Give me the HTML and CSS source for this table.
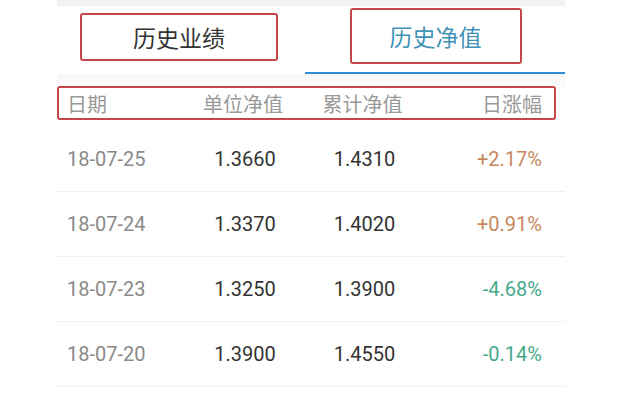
FILE: index.html
```html
<!DOCTYPE html>
<html lang="zh-CN">
<head>
  <meta charset="UTF-8" />
  <meta name="viewport" content="width=device-width, initial-scale=1.0" />
  <title>历史净值</title>
  <link rel="stylesheet" href="styles.css">
</head>
<body>
  <div class="panel">
    <div class="strip"></div>

    <div class="tabs">
      <div class="tab"><span class="mark mark-left">历史业绩</span></div>
      <div class="tab active"><span class="mark mark-right">历史净值</span></div>
    </div>

    <div class="head-wrap">
      <div class="head">
        <span class="c-date">日期</span>
        <span class="c-mid">单位净值</span>
        <span class="c-mid">累计净值</span>
        <span class="c-end">日涨幅</span>
      </div>
    </div>

    <div class="row">
      <span class="c-date date">18-07-25</span>
      <span class="c-mid num">1.3660</span>
      <span class="c-mid num">1.4310</span>
      <span class="c-end up">+2.17%</span>
    </div>
    <div class="row">
      <span class="c-date date">18-07-24</span>
      <span class="c-mid num">1.3370</span>
      <span class="c-mid num">1.4020</span>
      <span class="c-end up">+0.91%</span>
    </div>
    <div class="row">
      <span class="c-date date">18-07-23</span>
      <span class="c-mid num">1.3250</span>
      <span class="c-mid num">1.3900</span>
      <span class="c-end down">-4.68%</span>
    </div>
    <div class="row">
      <span class="c-date date">18-07-20</span>
      <span class="c-mid num">1.3900</span>
      <span class="c-mid num">1.4550</span>
      <span class="c-end down">-0.14%</span>
    </div>
  </div>
</body>
</html>
```

FILE: styles.css
```css
body {
  margin: 0;
  background: #fff;
  font-family: Roboto, "Noto Sans CJK SC", sans-serif;
  color: #333;
}
.panel {
  margin-left: 57px;
  width: 508px;
}
.strip {
  height: 6px;
  background: #f2f2f2;
}
.tabs {
  display: grid;
  grid-template-columns: 248px 260px;
  height: 68px;
}
.tab {
  display: flex;
  align-items: center;
  justify-content: center;
  padding-bottom: 6px;
  font-family: "Noto Sans CJK SC", sans-serif;
  font-size: 23px;
  color: #333;
}
.tab.active {
  color: #3f93b6;
  border-bottom: 2px solid #2f8ed4;
  padding-left: 1px;
}
.mark {
  display: flex;
  align-items: center;
  justify-content: center;
  box-sizing: border-box;
  border: 2.5px solid #c4474a;
  border-radius: 3px;
}
.mark-left {
  width: 198px;
  height: 48px;
  margin-right: 4px;
}
.mark-right {
  width: 172px;
  height: 56px;
}
.head-wrap {
  height: 53px;
  padding-top: 12px;
  box-sizing: border-box;
  background: linear-gradient(#f7f7f7, #fbfbfb 14px, #fff 14px);
}
.head {
  display: grid;
  grid-template-columns: 116px 120px 119px 1fr;
  align-items: center;
  height: 34px;
  margin-right: 9px;
  padding: 0 12px 0 8px;
  box-sizing: border-box;
  border: 2.5px solid #c4474a;
  border-radius: 3px;
  background: #fff;
  font-family: "Noto Sans CJK SC", sans-serif;
  font-size: 20px;
  color: #999;
}
.row {
  display: grid;
  grid-template-columns: 118px 120px 119px 1fr;
  align-items: center;
  height: 64px;
  padding: 0 23px 0 10px;
  border-bottom: 1px solid #f0f0f0;
  font-size: 20px;
}
.c-mid {
  text-align: center;
}
.c-end {
  text-align: right;
}
.date {
  color: #8a8a8a;
}
.num {
  color: #333;
}
.up {
  color: #c6875c;
}
.down {
  color: #45a98b;
}
```
